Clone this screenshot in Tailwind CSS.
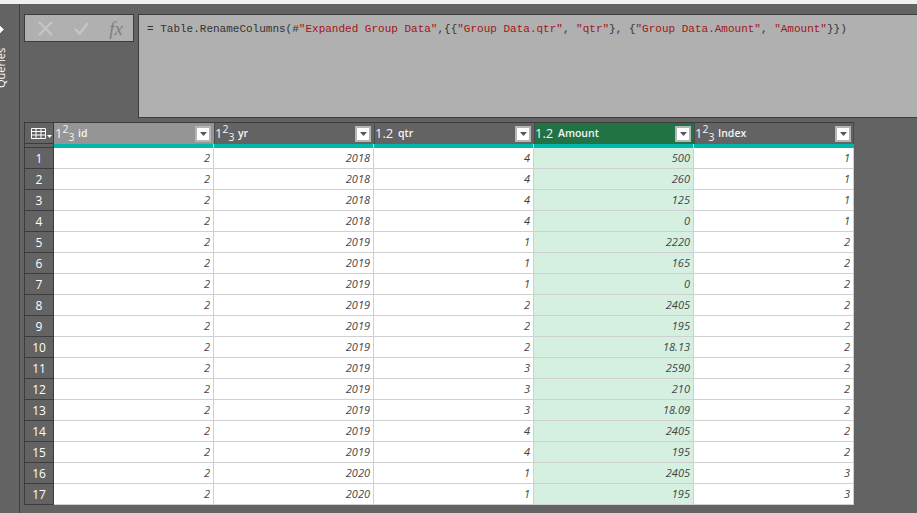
<!DOCTYPE html>
<html lang="en">
<head>
  <meta charset="UTF-8" />
  <title>Power Query Editor</title>
  <script src="https://cdn.jsdelivr.net/npm/@tailwindcss/browser@4"></script>
</head>
<body class="h-[513px] w-[917px] overflow-hidden bg-[#636363] font-['Open_Sans',sans-serif]">
  <div class="h-[4px] bg-[#f0f0f0]"></div>
  <div class="flex h-[509px]">
    <!-- Queries pane, collapsed -->
    <aside class="relative w-[20px] shrink-0 overflow-hidden border-r border-[#3f3f3f]">
      <svg class="absolute left-0 top-[22px]" width="4" height="7" viewBox="0 0 4 7"><path d="M0 0 L3.5 3.5 L0 7 Z" fill="#fff" stroke="#fff" stroke-width="0.6"/></svg>
      <span class="absolute left-[-19px] top-[57px] w-[40px] -rotate-90 text-center text-[11px] leading-[14px] text-white">Queries</span>
    </aside>
    <main class="flex-1 pl-[4px] pt-[10px]">
      <!-- Formula bar -->
      <div class="flex h-[104px] items-start gap-[4px]">
        <div class="flex h-[28px] w-[110px] items-center justify-between border border-[#3c3c3c] bg-[#b0b0b0] pl-[13px] pr-[10px]">
          <svg width="15" height="15" viewBox="0 0 15 15"><path d="M1 1 L14 14 M14 1 L1 14" stroke="#c6c6c6" stroke-width="2.2"/></svg>
          <svg width="15" height="13" viewBox="0 0 15 13"><path d="M1 7 L5.5 11.5 L14 1" fill="none" stroke="#c6c6c6" stroke-width="2.4"/></svg>
          <span class="font-['Liberation_Serif',serif] text-[19px] italic leading-none text-[#808080]">fx</span>
        </div>
        <div class="h-[104px] flex-1 border border-[#3c3c3c] border-r-0 bg-[#b0b0b0] pl-[8px] pt-[6px] font-['Liberation_Mono',monospace] text-[11px] leading-[16px] whitespace-nowrap text-[#333]">= Table.RenameColumns(#<span class="text-[#a31515]">"Expanded Group Data"</span>,{{<span class="text-[#a31515]">"Group Data.qtr"</span>, <span class="text-[#a31515]">"qtr"</span>}, {<span class="text-[#a31515]">"Group Data.Amount"</span>, <span class="text-[#a31515]">"Amount"</span>}})</div>
      </div>
      <!-- Table -->
      <div class="mt-[4px] grid w-[830px] grid-cols-[30px_repeat(5,160px)] border-t border-[#3c3c3c] text-[10.5px]">
        <div class="flex h-[21px] items-center gap-[1px] border-x border-b border-[#3c3c3c] pl-[6px]">
          <svg width="15" height="11" viewBox="0 0 15 11"><path d="M0.5 0.5 H14.5 V10.5 H0.5 Z M0.5 3.5 H14.5 M0.5 7 H14.5 M5 0.5 V10.5 M10 0.5 V10.5" fill="none" stroke="#fff"/></svg>
          <svg class="mt-[6px]" width="5" height="3" viewBox="0 0 5 3"><path d="M0 0 H5 L2.5 3 Z" fill="#fff"/></svg>
        </div>
        <div class="flex h-[21px] items-center bg-[#959595] pl-[1px] pr-[3px] font-semibold text-[#f4f4f4]"><span class="w-[22px] shrink-0 text-[13px] font-normal leading-none">1<sup class="text-[10.5px]">2</sup><sub class="text-[10.5px]">3</sub></span><span class="ml-[1px] flex-1">id</span><span class="flex h-[16px] w-[16px] items-center justify-center border-2 border-[#b5b5b5] bg-white"><svg width="7" height="4" viewBox="0 0 7 4"><path d="M0 0 H7 L3.5 4 Z" fill="#555"/></svg></span></div>
        <div class="flex h-[21px] items-center border-l border-[#4a4a4a] pr-[3px] font-semibold text-[#f4f4f4]"><span class="w-[22px] shrink-0 text-[13px] font-normal leading-none">1<sup class="text-[10.5px]">2</sup><sub class="text-[10.5px]">3</sub></span><span class="ml-[1px] flex-1">yr</span><span class="flex h-[16px] w-[16px] items-center justify-center border-2 border-[#b5b5b5] bg-white"><svg width="7" height="4" viewBox="0 0 7 4"><path d="M0 0 H7 L3.5 4 Z" fill="#555"/></svg></span></div>
        <div class="flex h-[21px] items-center border-l border-[#4a4a4a] pr-[3px] font-semibold text-[#f4f4f4]"><span class="w-[22px] shrink-0 text-[13px] font-normal leading-none">1.2</span><span class="ml-[1px] flex-1">qtr</span><span class="flex h-[16px] w-[16px] items-center justify-center border-2 border-[#b5b5b5] bg-white"><svg width="7" height="4" viewBox="0 0 7 4"><path d="M0 0 H7 L3.5 4 Z" fill="#555"/></svg></span></div>
        <div class="flex h-[21px] items-center border-l border-[#4a4a4a] bg-[#217346] pr-[3px] font-semibold text-[#f4f4f4]"><span class="w-[22px] shrink-0 text-[13px] font-normal leading-none">1.2</span><span class="ml-[1px] flex-1">Amount</span><span class="flex h-[16px] w-[16px] items-center justify-center border-2 border-[#b5b5b5] bg-white"><svg width="7" height="4" viewBox="0 0 7 4"><path d="M0 0 H7 L3.5 4 Z" fill="#555"/></svg></span></div>
        <div class="flex h-[21px] items-center border-x border-[#4a4a4a] pr-[2px] font-semibold text-[#f4f4f4]"><span class="w-[22px] shrink-0 text-[13px] font-normal leading-none">1<sup class="text-[10.5px]">2</sup><sub class="text-[10.5px]">3</sub></span><span class="ml-[1px] flex-1">Index</span><span class="flex h-[16px] w-[16px] items-center justify-center border-2 border-[#b5b5b5] bg-white"><svg width="7" height="4" viewBox="0 0 7 4"><path d="M0 0 H7 L3.5 4 Z" fill="#555"/></svg></span></div>
        <!-- quality bar -->
        <div class="h-[4px] border-x border-b border-[#3c3c3c]"></div>
        <div class="h-[4px] border-r border-[#d0d0d0] bg-[#01b8aa]"></div>
        <div class="h-[4px] border-r border-[#d0d0d0] bg-[#01b8aa]"></div>
        <div class="h-[4px] border-r border-[#d0d0d0] bg-[#01b8aa]"></div>
        <div class="h-[4px] border-r border-[#d0d0d0] bg-[#01b8aa]"></div>
        <div class="h-[4px] bg-[#01b8aa]"></div>
      </div>
      <div id="rows" class="grid w-[830px] grid-cols-[30px_repeat(5,160px)] text-[11px]"></div>
    </main>
  </div>
  <script>
    const data = [
      [2,2018,4,500,1],[2,2018,4,260,1],[2,2018,4,125,1],[2,2018,4,0,1],
      [2,2019,1,2220,2],[2,2019,1,165,2],[2,2019,1,0,2],[2,2019,2,2405,2],
      [2,2019,2,195,2],[2,2019,2,'18.13',2],[2,2019,3,2590,2],[2,2019,3,210,2],
      [2,2019,3,'18.09',2],[2,2019,4,2405,2],[2,2019,4,195,2],[2,2020,1,2405,3],[2,2020,1,195,3]
    ];
    let html = '';
    data.forEach((row, i) => {
      html += '<div class="flex h-[21px] items-center justify-center border-x border-b border-[#3c3c3c] pt-[1px] text-[12px] text-white">' + (i + 1) + '</div>';
      row.forEach((val, c) => {
        const bg = c === 3 ? 'bg-[#d5efe0]' : 'bg-white';
        html += '<div class="flex h-[21px] items-center justify-end border-r border-b border-[#d0d0d0] pr-[3px] pt-[1px] italic text-[#444] ' + bg + '">' + val + '</div>';
      });
    });
    document.getElementById('rows').innerHTML = html;
  </script>
</body>
</html>
